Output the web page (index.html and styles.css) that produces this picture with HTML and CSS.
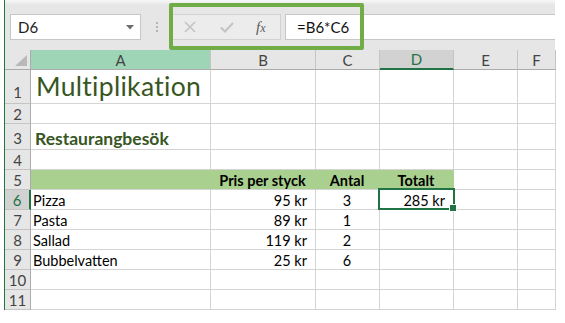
FILE: index.html
```html
<!DOCTYPE html>
<html lang="sv">
<head>
<meta charset="utf-8">
<title>Multiplikation</title>
<link rel="stylesheet" href="styles.css">
</head>
<body>
<div class="app">
  <div class="toolbar">
    <div class="namebox">
      <span class="nb-text">D6</span>
      <svg class="nb-arrow" width="8" height="5" viewBox="0 0 8 5"><path d="M0 0H8L4 4.5Z" fill="#6e6e6e"/></svg>
    </div>
    <div class="grip"><i></i><i></i><i></i></div>
    <div class="fxbox">
      <svg class="ico" width="12" height="12" viewBox="0 0 12 12"><path d="M1 1L11 11M11 1L1 11" stroke="#c3c3c3" stroke-width="1.6" fill="none"/></svg>
      <svg class="ico" width="14" height="11" viewBox="0 0 14 11"><path d="M1 5.5L5 9.5L13 1" stroke="#c3c3c3" stroke-width="2" fill="none"/></svg>
      <span class="fx"><i>f</i><span class="fxx">x</span></span>
    </div>
    <div class="formula">=B6*C6</div>
    <div class="callout"></div>
  </div>
  <div class="sheet">
    <div class="corner"><svg width="12" height="11" viewBox="0 0 12 11"><path d="M12 0V11H0Z" fill="#b9b9b9"/></svg></div>
    <div class="ch ch-a">A</div>
    <div class="ch">B</div>
    <div class="ch">C</div>
    <div class="ch ch-sel">D</div>
    <div class="ch">E</div>
    <div class="ch">F</div>

    <div class="rh r1">1</div>
    <div class="c r1 title">Multiplikation</div><div class="c r1"></div><div class="c r1"></div><div class="c r1"></div><div class="c r1"></div><div class="c r1"></div>

    <div class="rh">2</div>
    <div class="c"></div><div class="c"></div><div class="c"></div><div class="c"></div><div class="c"></div><div class="c"></div>

    <div class="rh r3">3</div>
    <div class="c r3 subtitle">Restaurangbesök</div><div class="c r3"></div><div class="c r3"></div><div class="c r3"></div><div class="c r3"></div><div class="c r3"></div>

    <div class="rh">4</div>
    <div class="c"></div><div class="c"></div><div class="c"></div><div class="c"></div><div class="c"></div><div class="c"></div>

    <div class="rh">5</div>
    <div class="c head"></div><div class="c head center">Pris per styck</div><div class="c head center">Antal</div><div class="c head center">Totalt</div><div class="c"></div><div class="c"></div>

    <div class="rh rh-sel">6</div>
    <div class="c">Pizza</div><div class="c num">95 kr</div><div class="c center">3</div><div class="c num sel">285 kr</div><div class="c"></div><div class="c"></div>

    <div class="rh">7</div>
    <div class="c">Pasta</div><div class="c num">89 kr</div><div class="c center">1</div><div class="c"></div><div class="c"></div><div class="c"></div>

    <div class="rh">8</div>
    <div class="c">Sallad</div><div class="c num">119 kr</div><div class="c center">2</div><div class="c"></div><div class="c"></div><div class="c"></div>

    <div class="rh">9</div>
    <div class="c">Bubbelvatten</div><div class="c num">25 kr</div><div class="c center">6</div><div class="c"></div><div class="c"></div><div class="c"></div>

    <div class="rh">10</div>
    <div class="c"></div><div class="c"></div><div class="c"></div><div class="c"></div><div class="c"></div><div class="c"></div>

    <div class="rh">11</div>
    <div class="c"></div><div class="c"></div><div class="c"></div><div class="c"></div><div class="c"></div><div class="c"></div>
  </div>
</div>
</body>
</html>
```

FILE: styles.css
```css
* { box-sizing: border-box; }
html, body { margin: 0; padding: 0; background: #ffffff; }
body { font-family: "Lato", "Liberation Sans", sans-serif; font-size: 14.5px; color: #000; }

.app {
  margin-left: 4px;
  width: 551px;
  border-left: 1px solid #217346;
}

.toolbar {
  position: relative;
  height: 50px;
  padding-top: 14px;
  display: flex;
  align-items: flex-start;
  background: linear-gradient(#f7f7f7 0, #e6e6e6 5px, #e6e6e6 100%);
}

.namebox {
  margin-left: 5px;
  width: 131px;
  height: 26px;
  background: #fff;
  border: 1px solid #c6c6c6;
  display: flex;
  align-items: center;
  justify-content: space-between;
  padding: 0 6px 0 7px;
  color: #222;
}
.nb-text { font-size: 15px; }
.nb-arrow { margin-top: 1px; }

.grip {
  width: 31px;
  height: 26px;
  display: flex;
  flex-direction: column;
  align-items: center;
  justify-content: center;
  gap: 2px;
}
.grip i { display: block; width: 2px; height: 2px; background: #b4b4b4; }

.fxbox {
  width: 109px;
  height: 26px;
  border: 1px solid #d2d2d2;
  background: #ececec;
  display: flex;
  align-items: center;
  padding-left: 11px;
  gap: 24px;
}
.fx { font-family: "Liberation Serif", serif; color: #5a5a5a; font-size: 15px; margin-left: -2px; }
.fx i { font-style: italic; }
.fxx { font-style: italic; font-size: 12px; }

.formula {
  margin-left: 4px;
  flex: 1;
  height: 26px;
  background: #fff;
  border: 1px solid #c6c6c6;
  border-right: none;
  padding-left: 11px;
  display: flex;
  align-items: center;
  color: #111;
  font-size: 15px;
}

.callout {
  position: absolute;
  left: 164px;
  top: 3px;
  width: 195px;
  height: 47px;
  border: 4px solid #70ad47;
  border-radius: 2px;
}

.sheet {
  display: grid;
  grid-template-columns: 26px 180px 105px 64px 74px 64px 38px;
  grid-template-rows: 20px 34px 20px 26px 20px 20px 20px 20px 20px 20px 20px 20px;
}

.corner, .ch {
  background: #e6e6e6;
  border-bottom: 1px solid #ababab;
  border-right: 1px solid #c4c4c4;
  color: #444;
}
.corner {
  display: flex;
  align-items: flex-end;
  justify-content: flex-end;
  padding: 0 3px 3px 0;
  border-right-color: #ababab;
}
.ch {
  display: flex;
  align-items: center;
  justify-content: center;
  font-size: 15px;
}
.ch:last-of-type { border-right: none; }
.ch-a { background: #9fd5b7; }
.ch-sel { background: #d2d2d2; color: #217346; border-bottom: 2px solid #217346; }

.rh {
  background: #e6e6e6;
  border-right: 1px solid #ababab;
  border-bottom: 1px solid #c4c4c4;
  color: #444;
  display: flex;
  align-items: center;
  justify-content: center;
  font-size: 15px;
  padding-top: 1px;
}
.rh.r1, .rh.r3 { align-items: flex-end; padding-bottom: 2px; }
.rh-sel { background: #d2d2d2; color: #217346; border-right: 2px solid #217346; }

.c {
  border-right: 1px solid #d4d4d4;
  border-bottom: 1px solid #d4d4d4;
  display: flex;
  align-items: center;
  padding: 1px 3px 0 2px;
  white-space: nowrap;
  position: relative;
}
.title {
  font-size: 26.5px;
  font-weight: 400;
  color: #375623;
  padding-left: 5px;
  padding-bottom: 1px;
  align-items: flex-end;
  letter-spacing: 0.3px;
}
.subtitle {
  font-size: 17.5px;
  font-weight: 700;
  color: #375623;
  padding-left: 4px;
  padding-top: 3px;
}
.head {
  background: #a9d08e;
  border-right-color: #a9d08e;
  font-weight: 700;
}
.center { justify-content: center; }
.num { justify-content: flex-end; padding-right: 8px; }

.sel::after {
  content: "";
  position: absolute;
  left: -2px;
  top: -2px;
  right: -2px;
  bottom: -1px;
  border: 2px solid #217346;
}
.sel::before {
  content: "";
  position: absolute;
  right: -4px;
  bottom: -3px;
  width: 6px;
  height: 6px;
  background: #217346;
  border: 1px solid #fff;
  z-index: 2;
}
```
